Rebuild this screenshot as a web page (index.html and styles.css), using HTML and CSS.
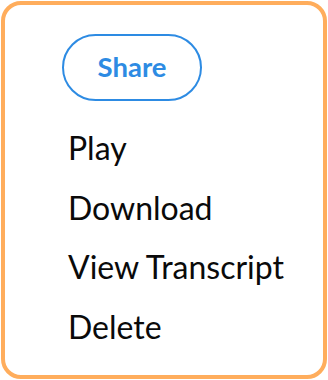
FILE: index.html
```html
<!DOCTYPE html>
<html>
<head>
<meta charset="utf-8">
<link rel="stylesheet" href="styles.css">
</head>
<body>
<div class="menu">
  <button class="share">Share</button>
  <ul class="items">
    <li>Play</li>
    <li>Download</li>
    <li>View Transcript</li>
    <li>Delete</li>
  </ul>
</div>
</body>
</html>
```
FILE: styles.css
```css
html, body {
  margin: 0;
  padding: 0;
  background: #ffffff;
}
body {
  width: 328px;
  height: 380px;
  padding: 1px;
  box-sizing: border-box;
  font-family: Lato, "Liberation Sans", sans-serif;
}
.menu {
  box-sizing: border-box;
  width: 326px;
  height: 378px;
  border: 4px solid #ffad5c;
  border-radius: 20px;
  padding: 29px 0 0 57px;
  display: flex;
  flex-direction: column;
  align-items: flex-start;
}
.share {
  box-sizing: border-box;
  width: 140px;
  height: 67px;
  border: 2px solid #2d8be3;
  border-radius: 34px;
  background: #fff;
  color: #2d8be3;
  font-family: Lato, "Liberation Sans", sans-serif;
  font-weight: 700;
  font-size: 27.5px;
  padding: 0 0 2px 0;
  margin: 0;
}
.items {
  list-style: none;
  margin: 17px 0 0 0;
  padding: 0 0 0 6px;
  color: #0a0a0a;
  font-size: 32px;
}
.items li {
  height: 59.5px;
  line-height: 59.5px;
}
```
